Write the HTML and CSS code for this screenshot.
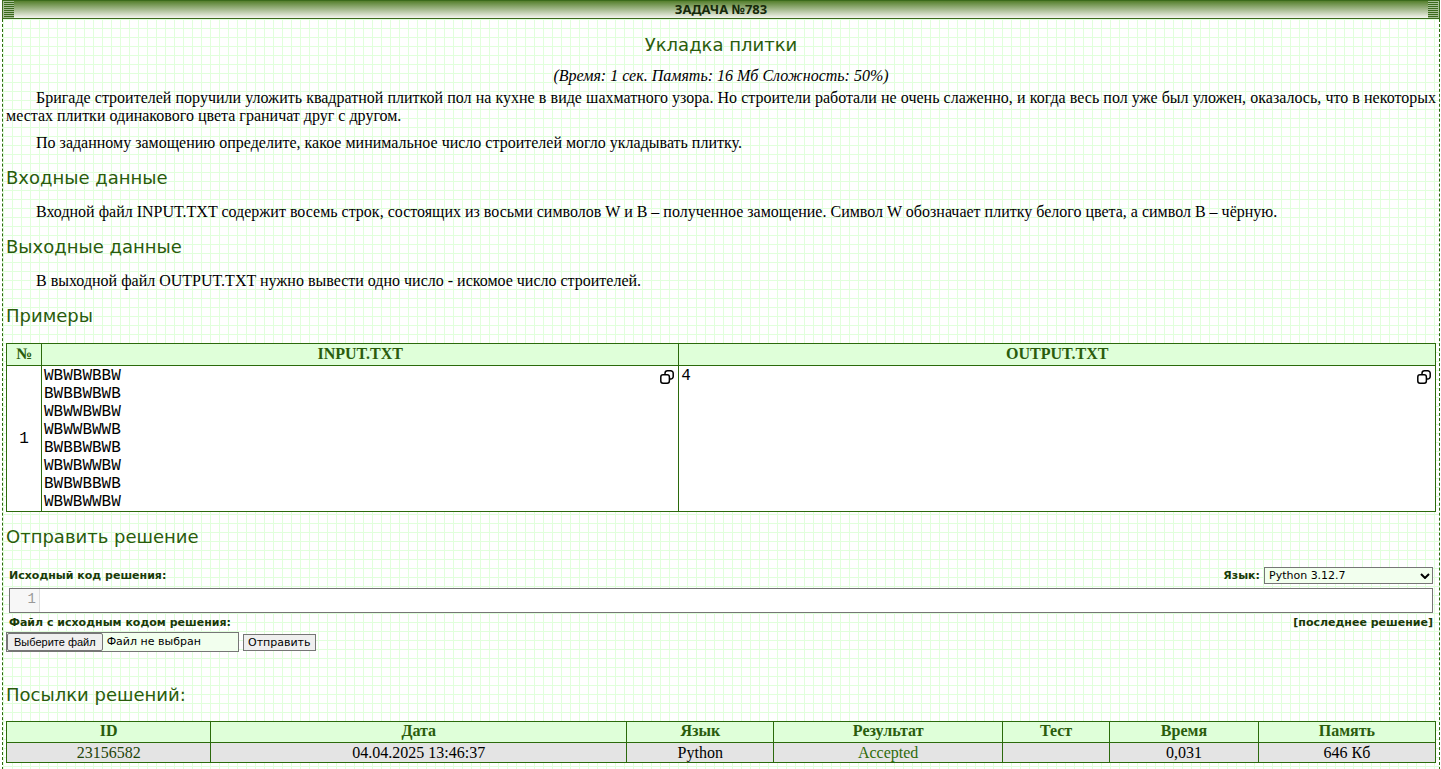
FILE: index.html
```html
<!DOCTYPE html>
<html lang="ru">
<head>
<meta charset="utf-8">
<title>Задача №783</title>
<link rel="stylesheet" href="styles.css">
</head>
<body>
<div class="page">
  <header class="bar">
    <span class="grip"></span>
    <h1 class="bar-title">ЗАДАЧА №783</h1>
    <span class="grip"></span>
  </header>
  <main class="content">
    <h2 class="heading heading-center">Укладка плитки</h2>
    <p class="limits">(Время: 1 сек. Память: 16 Мб Сложность: 50%)</p>
    <p class="text">Бригаде строителей поручили уложить квадратной плиткой пол на кухне в виде шахматного узора. Но строители работали не очень слаженно, и когда весь пол уже был уложен, оказалось, что в некоторых местах плитки одинакового цвета граничат друг с другом.</p>
    <p class="text">По заданному замощению определите, какое минимальное число строителей могло укладывать плитку.</p>
    <h2 class="heading">Входные данные</h2>
    <p class="text">Входной файл INPUT.TXT содержит восемь строк, состоящих из восьми символов W и B – полученное замощение. Символ W обозначает плитку белого цвета, а символ B – чёрную.</p>
    <h2 class="heading">Выходные данные</h2>
    <p class="text">В выходной файл OUTPUT.TXT нужно вывести одно число - искомое число строителей.</p>
    <h2 class="heading">Примеры</h2>
    <table class="grid samples">
      <colgroup><col class="col-num"><col class="col-in"><col></colgroup>
      <thead><tr><th>№</th><th>INPUT.TXT</th><th>OUTPUT.TXT</th></tr></thead>
      <tbody>
        <tr>
          <td class="sample-num">1</td>
          <td class="sample"><div class="sample-row"><pre class="code">WBWBWBBW
BWBBWBWB
WBWWBWBW
WBWWBWWB
BWBBWBWB
WBWBWWBW
BWBWBBWB
WBWBWWBW</pre>
            <button class="copy" type="button" aria-label="Копировать"><svg class="copy-icon" viewBox="0 0 14 14" aria-hidden="true"><path d="M5 4.500V3.200A2.500 2.500 0 0 1 7.500 0.800H10.700A2.500 2.500 0 0 1 13.200 3.300V6.500A2.500 2.500 0 0 1 10.700 9H9.500"/><rect x="0.800" y="4.800" width="8.600" height="8.400" rx="2.200"/></svg></button></div></td>
          <td class="sample"><div class="sample-row"><pre class="code">4</pre>
            <button class="copy" type="button" aria-label="Копировать"><svg class="copy-icon" viewBox="0 0 14 14" aria-hidden="true"><path d="M5 4.500V3.200A2.500 2.500 0 0 1 7.500 0.800H10.700A2.500 2.500 0 0 1 13.200 3.300V6.500A2.500 2.500 0 0 1 10.700 9H9.500"/><rect x="0.800" y="4.800" width="8.600" height="8.400" rx="2.200"/></svg></button></div></td>
        </tr>
      </tbody>
    </table>
    <h2 class="heading">Отправить решение</h2>
    <form class="submit">
      <div class="form-row">
        <label class="label" for="source">Исходный код решения:</label>
        <div class="lang">
          <label class="label" for="lang">Язык:</label>
          <span class="select-box">
            <select class="select" id="lang"><option>Python 3.12.7</option></select>
            <svg class="chevron" viewBox="0 0 10 6" aria-hidden="true"><path d="M1 1L5 5L9 1"/></svg>
          </span>
        </div>
      </div>
      <div class="editor">
        <span class="gutter">1</span>
        <textarea class="source" id="source" rows="1"></textarea>
      </div>
      <div class="form-row">
        <label class="label" for="file">Файл с исходным кодом решения:</label>
        <a class="label" href="#">[последнее решение]</a>
      </div>
      <div class="actions">
        <label class="file">
          <input class="file-input" id="file" type="file">
          <span class="file-button">Выберите файл</span>
          <span class="file-name">Файл не выбран</span>
        </label>
        <button class="send" type="submit">Отправить</button>
      </div>
    </form>
    <h2 class="heading">Посылки решений:</h2>
    <table class="grid results">
      <colgroup><col class="c-id"><col class="c-date"><col class="c-lang"><col class="c-res"><col class="c-test"><col class="c-time"><col></colgroup>
      <thead><tr><th>ID</th><th>Дата</th><th>Язык</th><th>Результат</th><th>Тест</th><th>Время</th><th>Память</th></tr></thead>
      <tbody><tr><td><a class="id-link" href="#">23156582</a></td><td>04.04.2025 13:46:37</td><td>Python</td><td class="accepted">Accepted</td><td></td><td>0,031</td><td>646 Кб</td></tr></tbody>
    </table>
  </main>
</div>
</body>
</html>
```
FILE: styles.css
```css
:root {
  --line: #2b6a0b;
  --deep: #3b6a1c;
  --heading: #2a5c0c;
  --label: #1a3a08;
  --mesh: #e1ffdc;
  --head: #dfffd9;
}

* { box-sizing: border-box; }

body {
  margin: 0;
  background: #fff;
  color: #000;
  font: 16px/18px "Liberation Serif", "Times New Roman", serif;
}

.page {
  display: flex;
  flex-direction: column;
  min-height: 100vh;
  margin: 0 1px 0 2px;
}

.bar {
  display: flex;
  justify-content: space-between;
  height: 19px;
  border: 1px solid var(--deep);
  background: linear-gradient(#557f2c, #f4f5ef);
}

.grip {
  width: 11px;
  border: solid #a9bf98;
  border-width: 1px 0 0 1px;
  background: repeating-linear-gradient(var(--deep) 0 1px, #a9bf98 1px 2px);
}

.grip:last-child { border-width: 1px 1px 0 0; }

.bar-title {
  margin: 0;
  color: #16290a;
  font: bold 13px/17px "Noto Sans", Tahoma, sans-serif;
}

.content {
  flex: 1;
  padding: 15px 3px 7px;
  border: dashed var(--line);
  border-width: 0 1px;
  background:
    linear-gradient(var(--mesh) 1px, transparent 1px) 0 0 / 9px 9px,
    linear-gradient(90deg, var(--mesh) 1px, transparent 1px) 0 0 / 9px 9px,
    #fff;
}

.heading {
  margin: 14px 0;
  color: var(--heading);
  font: 18px/22px "DejaVu Sans", Verdana, sans-serif;
}

.heading-center {
  margin: 0 0 11px;
  text-align: center;
}

.limits {
  margin: 0 0 4px;
  font-style: italic;
  text-align: center;
}

.text {
  margin: 0 0 9px;
  text-align: justify;
  text-indent: 30px;
}

.text + .heading { margin-top: 15px; }

.grid {
  width: 100%;
  border-collapse: collapse;
  table-layout: fixed;
  text-align: center;
}

.grid th,
.grid td {
  padding: 1px 2px;
  border: 1px solid var(--line);
}

.grid th {
  padding: 0 2px 2px;
  background: var(--head);
  color: var(--heading);
}

.col-num { width: 35px; }
.col-in { width: 44.6%; }

.samples { margin-top: 16px; }

.samples th { height: 22px; }

.samples td {
  padding: 1px 2px 0;
  background: #fff;
}

.samples .sample-num,
.code { font: 16px/18px "Liberation Mono", "Courier New", monospace; }

.samples .sample { vertical-align: top; }

.sample-row {
  display: flex;
  justify-content: space-between;
  align-items: flex-start;
}

.code {
  margin: 0;
  text-align: left;
}

.copy {
  display: flex;
  margin: 3px 2px 0 0;
  padding: 0;
  border: 0;
  background: none;
}

.copy-icon {
  width: 14px;
  height: 14px;
  fill: none;
  stroke: #000;
  stroke-width: 1.5;
}

.submit {
  display: flex;
  flex-direction: column;
  margin: 19px 0 32px;
}

.form-row {
  display: flex;
  justify-content: space-between;
  align-items: center;
  height: 18px;
  padding: 0 3px;
}

.label {
  color: var(--label);
  font: bold 11px/18px "DejaVu Sans", Verdana, sans-serif;
  text-decoration: none;
}

.lang {
  display: flex;
  align-items: flex-start;
  gap: 4px;
}

.select-box {
  display: grid;
  align-items: center;
}

.select {
  grid-area: 1 / 1;
  width: 169px;
  height: 17px;
  padding: 0 4px;
  appearance: none;
  border: 1px solid #767676;
  border-radius: 0;
  background: #f2ffee;
  color: #000;
  font: 11px/15px "DejaVu Sans", Verdana, sans-serif;
}

.chevron {
  grid-area: 1 / 1;
  justify-self: end;
  width: 10px;
  height: 6px;
  margin-right: 3px;
  fill: none;
  stroke: #000;
  stroke-width: 2;
  pointer-events: none;
}

.editor {
  display: flex;
  height: 25px;
  margin: 3px 3px 1px;
  border: 1px solid #767676;
  background: #fff;
}

.gutter {
  width: 30px;
  padding-right: 3px;
  border-right: 1px solid #ddd;
  background: #f7f7f7;
  color: #999;
  font: 14px/21px "Liberation Mono", "Courier New", monospace;
  text-align: right;
}

.source {
  flex: 1;
  padding: 3px 4px;
  border: 0;
  outline: 0;
  background: none;
  font: 14px/17px "Liberation Mono", "Courier New", monospace;
  resize: none;
}

.actions {
  display: flex;
  align-items: center;
  gap: 4px;
}

.file {
  display: flex;
  align-items: center;
  gap: 4px;
  width: 233px;
  height: 20px;
  border: 1px solid #767676;
  background: #f2ffee;
  font: 11px/16px "DejaVu Sans", Verdana, sans-serif;
}

.file-input {
  position: absolute;
  width: 1px;
  height: 1px;
  overflow: hidden;
  opacity: 0;
}

.file-button {
  padding: 0 6px;
  border: 1px solid #767676;
  border-radius: 2px;
  background: #efefef;
  font: 11px/16px "Liberation Sans", Arial, sans-serif;
}

.send {
  height: 17px;
  padding: 0 4px;
  border: 1px solid #767676;
  background: #efefef;
  color: #000;
  font: 11px/15px "DejaVu Sans", Verdana, sans-serif;
}

.results { margin-top: 15px; }

.results td {
  padding: 1px 2px 0;
  background: #e4e4e4;
}

.c-id { width: 14.3%; }
.c-date { width: 29.1%; }
.c-lang { width: 10.3%; }
.c-res { width: 16%; }
.c-test { width: 7.5%; }
.c-time { width: 10.4%; }

.id-link {
  color: #1f4509;
  text-decoration: none;
}

.results .accepted { color: #2f6b0a; }
```
